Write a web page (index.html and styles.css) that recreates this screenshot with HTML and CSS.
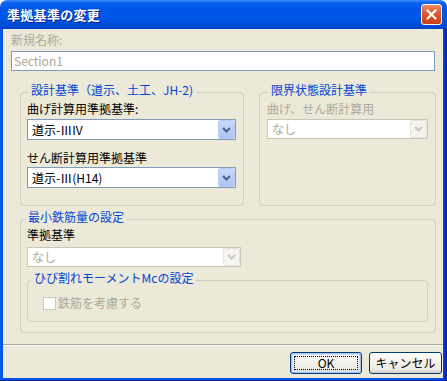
FILE: index.html
```html
<!DOCTYPE html>
<html lang="ja">
<head>
  <meta charset="UTF-8" />
  <title>準拠基準の変更</title>
  <link rel="stylesheet" href="styles.css">
</head>
<body>

  <div class="window">
    <!-- Title bar -->
    <div class="titlebar">
      <span class="title">準拠基準の変更</span>
      <div class="close-btn" aria-label="閉じる">
        <svg width="11" height="11" viewBox="0 0 11 11">
          <path d="M1.5 1.5 L9.5 9.5 M9.5 1.5 L1.5 9.5" stroke="#fff" stroke-width="2.2" stroke-linecap="square" fill="none"/>
        </svg>
      </div>
    </div>

    <div class="frame">
      <div class="client">
        <div class="field-label disabled">新規名称:</div>
        <div class="textbox">Section1</div>

        <div class="group-row">
          <!-- Design standard -->
          <div class="group group-design">
            <div class="group-title">設計基準（道示、土工、JH-2)</div>
            <div class="label">曲げ計算用準拠基準:</div>
            <div class="combo">
              <span class="combo-text">道示-<span class="roman">Ⅲ</span>IV</span>
              <span class="combo-btn">
                <svg width="9" height="6" viewBox="0 0 9 6"><path d="M1 1 L4.5 4.5 L8 1" stroke="currentColor" stroke-width="2" fill="none"/></svg>
              </span>
            </div>
            <div class="label label-gap">せん断計算用準拠基準</div>
            <div class="combo combo-tight">
              <span class="combo-text">道示-<span class="roman">Ⅲ</span>(H14)</span>
              <span class="combo-btn">
                <svg width="9" height="6" viewBox="0 0 9 6"><path d="M1 1 L4.5 4.5 L8 1" stroke="currentColor" stroke-width="2" fill="none"/></svg>
              </span>
            </div>
          </div>

          <!-- Limit state -->
          <div class="group group-limit">
            <div class="group-title">限界状態設計基準</div>
            <div class="label disabled">曲げ、せん断計算用</div>
            <div class="combo combo-disabled">
              <span class="combo-text">なし</span>
              <span class="combo-btn">
                <svg width="9" height="6" viewBox="0 0 9 6"><path d="M1 1 L4.5 4.5 L8 1" stroke="currentColor" stroke-width="2" fill="none"/></svg>
              </span>
            </div>
          </div>
        </div>

        <!-- Minimum rebar -->
        <div class="group group-rebar">
          <div class="group-title title-tight">最小鉄筋量の設定</div>
          <div class="label label-rebar">準拠基準</div>
          <div class="combo combo-disabled combo-rebar">
            <span class="combo-text">なし</span>
            <span class="combo-btn">
              <svg width="9" height="6" viewBox="0 0 9 6"><path d="M1 1 L4.5 4.5 L8 1" stroke="currentColor" stroke-width="2" fill="none"/></svg>
            </span>
          </div>

          <div class="group group-crack">
            <div class="group-title title-crack">ひび割れモーメントMcの設定</div>
            <div class="check-row disabled">
              <span class="checkbox"></span>
              <span>鉄筋を考慮する</span>
            </div>
          </div>
        </div>

        <div class="separator"></div>

        <div class="button-row">
          <div class="btn btn-default"><span>OK</span></div>
          <div class="btn"><span>キャンセル</span></div>
        </div>
      </div>
    </div>
  </div>

</body>
</html>
```

FILE: styles.css
```css
/* Base */
body {
  margin: 0;
  background: #ffffff;
  font-family: "Noto Sans CJK JP", "Noto Sans", sans-serif;
  font-size: 12px;
  line-height: 14px;
  color: #000;
}

/* Window chrome */
.window {
  width: 447px;
  height: 381px;
  display: flex;
  flex-direction: column;
  border-radius: 7px 7px 0 0;
  overflow: hidden;
  box-sizing: border-box;
}

.titlebar {
  height: 29px;
  flex: none;
  display: flex;
  align-items: center;
  justify-content: space-between;
  padding-left: 7px;
  background: linear-gradient(
    to bottom,
    #3d8eff 0px,
    #0a61f0 3px,
    #0058e8 8px,
    #0056e6 18px,
    #004cd8 26px,
    #0042c4 29px
  );
}

.title {
  color: #fff;
  font-weight: 700;
  font-size: 13px;
  line-height: 16px;
  text-shadow: 1px 1px 0 #0a1c80;
  letter-spacing: 0.3px;
}

.close-btn {
  width: 19px;
  height: 19px;
  margin-right: 5px;
  border: 1px solid #fff;
  border-radius: 3px;
  background: linear-gradient(to bottom, #e98a68 0%, #e0562e 45%, #cc3d12 100%);
  display: flex;
  align-items: center;
  justify-content: center;
}

.frame {
  flex: 1;
  display: flex;
  padding: 0 4px 3px 3px;
  background: linear-gradient(to right, #0a5ae8 0, #0054e3 3px, #0054e3 440px, #0a3fd0 444px, #001ea0 447px);
  box-shadow: inset 0 -1px 0 #001ea0;
}

.client {
  flex: 1;
  background: #ece9d8;
  padding: 4px 0 0 8px;
}

/* Text */
.disabled {
  color: #aca899;
}

.textbox {
  width: 424px;
  height: 20px;
  margin-top: 4px;
  box-sizing: border-box;
  border: 1px solid #7f9db9;
  background: #fff;
  color: #aca899;
  padding-left: 2px;
  line-height: 18px;
}

/* Group boxes */
.group-row {
  display: flex;
  gap: 15px;
  margin: 21px 0 0 9px;
  width: 416px;
}

.group {
  border: 1px solid #d0d0bf;
  border-radius: 4px;
  box-sizing: border-box;
}

.group-title {
  width: fit-content;
  margin: -10px 0 0 1px;
  padding: 0 3px;
  background: #ece9d8;
  color: #0046d5;
  white-space: nowrap;
}

.group-design {
  width: 224px;
  padding: 0 7px 17px 6px;
}

.group-limit {
  width: 177px;
  padding: 0 7px 0 7px;
}

.label {
  margin-top: 5px;
  white-space: nowrap;
}

.label-gap {
  margin-top: 11px;
}

/* Combo boxes */
.combo {
  height: 21px;
  margin-top: 3px;
  box-sizing: border-box;
  border: 1px solid #7f9db9;
  background: #fff;
  display: flex;
  align-items: center;
  justify-content: space-between;
}

.combo-tight {
  margin-top: 2px;
}

.combo-text {
  padding-left: 4px;
  line-height: 14px;
  white-space: nowrap;
}

.roman {
  font-feature-settings: "fwid";
}

.combo-btn {
  width: 17px;
  height: 19px;
  box-sizing: border-box;
  border: 1px solid #bacdf7;
  border-radius: 2px;
  background: linear-gradient(to bottom, #c8d8fd 0%, #bccffb 50%, #afc5f7 100%);
  color: #4d6185;
  display: flex;
  align-items: center;
  justify-content: center;
}

.combo-disabled {
  height: 20px;
  border-color: #c9c7ba;
}

.combo-disabled .combo-text {
  color: #aca899;
}

.combo-disabled .combo-btn {
  height: 18px;
  border-color: #e6e4da;
  background: #f5f4ee;
  color: #c9c7ba;
}

.group-rebar {
  width: 416px;
  margin: 13px 0 0 9px;
  padding: 0 7px 10px 6px;
}

.title-tight {
  margin-left: -2px;
}

.label-rebar {
  margin-top: 4px;
}

.combo-rebar {
  width: 214px;
  margin-top: 5px;
}

.group-crack {
  margin-top: 13px;
  padding: 0 8px 11px 15px;
}

.title-crack {
  margin-left: -12px;
}

.check-row {
  margin-top: 11px;
  display: flex;
  align-items: center;
  gap: 2px;
}

.checkbox {
  width: 13px;
  height: 13px;
  box-sizing: border-box;
  border: 1px solid #cac8bb;
  background: #fff;
}

/* Footer */
.separator {
  margin: 11px 0 0 -8px;
  border-top: 1px solid #aca899;
  border-bottom: 1px solid #fff;
}

.button-row {
  margin-top: 6px;
  display: flex;
  justify-content: flex-end;
  gap: 7px;
  padding-right: 1px;
}

.btn {
  width: 73px;
  height: 22px;
  box-sizing: border-box;
  border: 1px solid #003c74;
  border-radius: 3px;
  background: linear-gradient(to bottom, #ffffff 0%, #f4f3ee 40%, #ecebe6 80%, #d6d0c5 100%);
  display: flex;
  align-items: center;
  justify-content: center;
}

.btn-default {
  width: 72px;
  box-shadow: inset 0 0 0 1px #a8c4f4, inset 0 0 0 2px #cee0fb;
  position: relative;
}

.btn-default::after {
  content: '';
  position: absolute;
  top: 3px;
  left: 3px;
  right: 3px;
  bottom: 3px;
  border: 1px dotted #000;
}
```
